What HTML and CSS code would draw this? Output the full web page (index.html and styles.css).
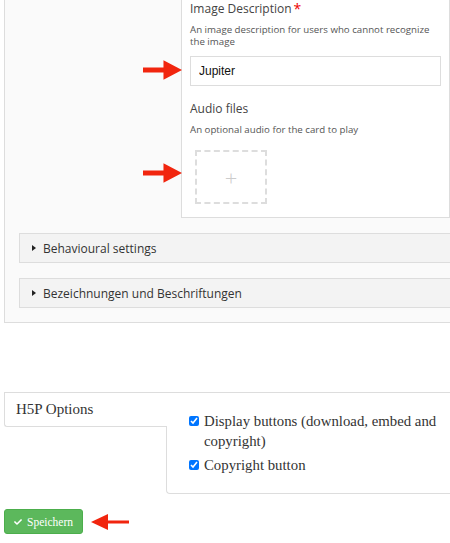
FILE: index.html
```html
<!DOCTYPE html>
<html lang="en">
<head>
  <meta charset="UTF-8" />
  <title>Image card editor</title>
  <link rel="stylesheet" href="styles.css">
</head>
<body>
  <div class="editor">
    <div class="card-row">
      <div class="card-list"></div>
      <div class="card-panel">
        <div class="field-title">Image Description<span class="required">*</span></div>
        <div class="field-desc">An image description for users who cannot recognize the image</div>
        <input class="text-input" type="text" value="Jupiter" />

        <div class="field-title audio-title">Audio files</div>
        <div class="field-desc">An optional audio for the card to play</div>
        <div class="upload-box"><span class="plus">+</span></div>
      </div>
    </div>

    <div class="group">
      <span class="caret"></span>Behavioural settings
    </div>
    <div class="group">
      <span class="caret"></span>Bezeichnungen und Beschriftungen
    </div>
  </div>

  <div class="h5p-options">
    <div class="h5p-tab">H5P Options</div>
    <div class="h5p-body">
      <label class="option"><input type="checkbox" checked /> <span>Display buttons (download, embed and copyright)</span></label>
      <label class="option"><input type="checkbox" checked /> <span>Copyright button</span></label>
    </div>
  </div>

  <div class="actions">
    <button class="save-btn">
      <svg class="check" viewBox="0 0 512 512"><path d="M173.9 439.4l-166.4-166.4c-10-10-10-26.2 0-36.2l36.2-36.2c10-10 26.2-10 36.2 0L192 312.7 432.1 72.6c10-10 26.2-10 36.2 0l36.2 36.2c10 10 10 26.2 0 36.2l-294.4 294.4c-10 10-26.2 10-36.2 0z"/></svg>Speichern
    </button>
    <svg class="arrow-left" viewBox="0 0 38 16"><path d="M0 8 L17 0 L17 6.5 L38 6.5 L38 9.5 L17 9.5 L17 16 Z"/></svg>
  </div>

  <!-- annotation arrows drawn over the form -->
  <svg class="arrow arrow-one" viewBox="0 0 40 20"><path d="M0 7.5 L21 7.5 L21 0 L40 10 L21 20 L21 12.5 L0 12.5 Z"/></svg>
  <svg class="arrow arrow-two" viewBox="0 0 40 20"><path d="M0 7.5 L21 7.5 L21 0 L40 10 L21 20 L21 12.5 L0 12.5 Z"/></svg>
</body>
</html>
```

FILE: styles.css
```css
html {
  overflow: hidden;
}

body {
  margin: 0;
  background: #fff;
  font-family: 'Open Sans', sans-serif;
  color: #333;
  position: relative;
}

.editor {
  margin-left: 4px;
  background: #fafafa;
  border-left: 1px solid #ddd;
  border-bottom: 1px solid #ddd;
  padding: 0 0 14px 14px;
}

.card-row {
  display: flex;
}

.card-list {
  width: 162px;
}

.card-panel {
  flex: 1;
  background: #fff;
  border: 1px solid #ddd;
  border-top: 0;
  padding: 1px 8px 13px 8px;
}

.field-title {
  font-size: 12px;
  line-height: 16px;
  color: #444;
}

.audio-title {
  margin-top: 15px;
}

.required {
  display: inline-block;
  height: 14px;
  color: #e00;
  font-size: 14px;
  line-height: 14px;
  vertical-align: top;
  margin: 1px 0 0 2px;
}

.field-desc {
  font-size: 9.7px;
  line-height: 12px;
  color: #555;
  margin-top: 7px;
}

.text-input {
  display: block;
  box-sizing: border-box;
  width: 100%;
  height: 30px;
  margin-top: 8px;
  padding: 0 8px;
  border: 1px solid #ddd;
  font-family: 'Liberation Sans', Arial, sans-serif;
  font-size: 12px;
  color: #111;
  background: #fff;
}

.upload-box {
  width: 68px;
  height: 50px;
  margin: 14px 0 0 5px;
  border: 2px dashed #ddd;
  display: flex;
  align-items: center;
  justify-content: center;
}

.plus {
  font-size: 22px;
  font-weight: 300;
  color: #ccc;
  line-height: 1;
}

.group {
  margin-top: 15px;
  height: 28px;
  display: flex;
  align-items: center;
  background: #f3f3f3;
  border: 1px solid #ddd;
  border-right: 0;
  font-size: 12px;
  color: #333;
  padding-left: 12px;
}

.caret {
  width: 0;
  height: 0;
  border-left: 4px solid #222;
  border-top: 3px solid transparent;
  border-bottom: 3px solid transparent;
  margin-right: 7px;
}

/* H5P options block */
.h5p-options {
  margin: 69px 0 0 4px;
  display: flex;
  border-top: 1px solid #ddd;
  font-family: 'Liberation Serif', 'Times New Roman', serif;
  color: #333;
}

.h5p-tab {
  position: relative;
  width: 151px;
  height: 33px;
  padding-left: 11px;
  margin-right: -1px;
  background: #fff;
  border-left: 1px solid #ddd;
  border-bottom: 1px solid #ddd;
  border-bottom-left-radius: 3px;
  font-size: 15px;
  line-height: 33px;
}

.h5p-body {
  flex: 1;
  height: 82px;
  padding: 18px 0 0 22px;
  border-left: 1px solid #ddd;
  border-bottom: 1px solid #ddd;
  border-bottom-left-radius: 4px;
}

.option {
  display: flex;
  align-items: flex-start;
  font-size: 14.8px;
  line-height: 20px;
  margin-bottom: 4px;
}

.option input {
  width: 10px;
  height: 10px;
  margin: 5px 5px 0 0;
  flex-shrink: 0;
}

.actions {
  display: flex;
  align-items: center;
  margin: 15px 0 0 4px;
}

.save-btn {
  height: 25px;
  padding: 0 9px;
  display: flex;
  align-items: center;
  background: #5cb85c;
  border: 1px solid #4cae4c;
  border-radius: 3px;
  color: #fff;
  font-family: 'Liberation Serif', 'Times New Roman', serif;
  font-size: 11.5px;
}

.check {
  width: 8px;
  height: 8px;
  fill: #fff;
  margin-right: 5px;
}

.arrow-left {
  width: 38px;
  height: 16px;
  margin-left: 8px;
  fill: #f1250e;
}

.arrow {
  position: absolute;
  width: 39px;
  height: 20px;
  fill: #f1250e;
}

.arrow-one {
  left: 143px;
  top: 60px;
}

.arrow-two {
  left: 143px;
  top: 163px;
}
```
